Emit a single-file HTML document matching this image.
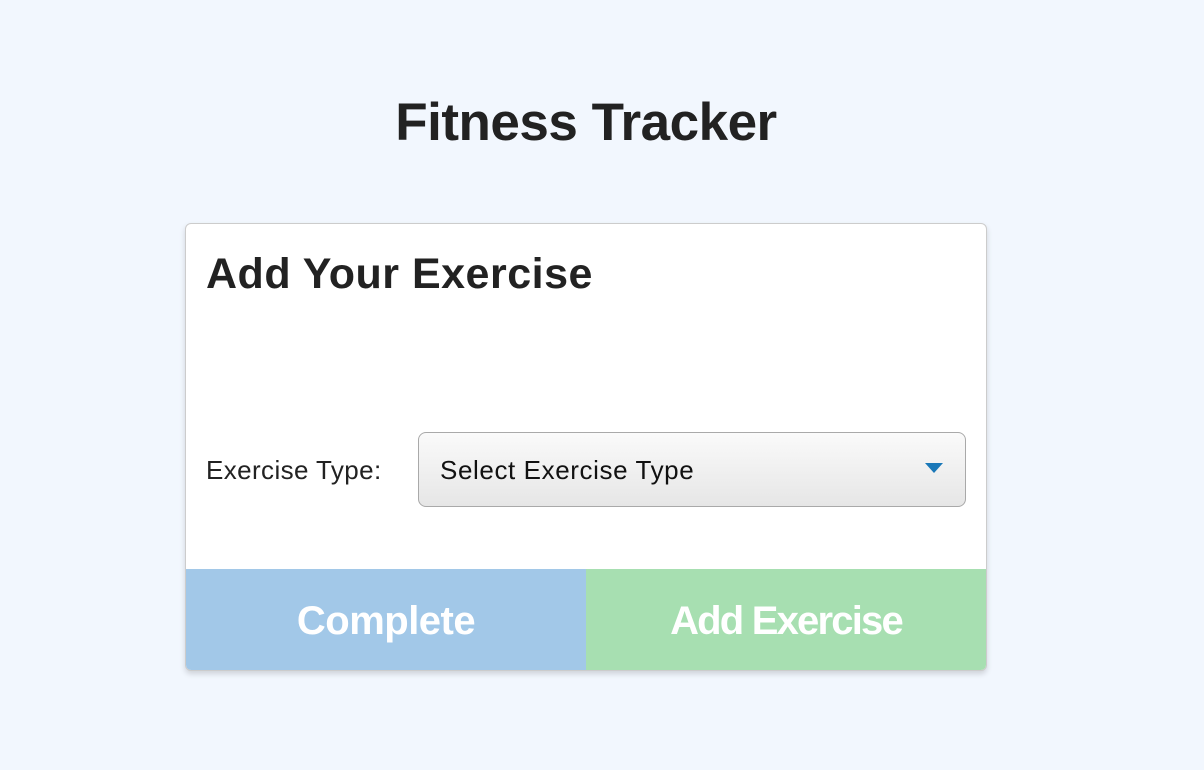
<!DOCTYPE html>
<html><head><style>
body{margin:0;background:#f2f7fe;font-family:"Liberation Sans",sans-serif;width:1204px;height:770px;position:relative;overflow:hidden}
h1{position:absolute;top:92px;left:0;width:1172px;margin:0;text-align:center;font-size:53px;font-weight:bold;color:#222;letter-spacing:-0.5px}
.card{position:absolute;left:185px;top:223px;width:800px;height:446px;background:#fff;border:1px solid #ccc;border-radius:6px;box-shadow:0 3px 6px rgba(0,0,0,.15);overflow:hidden}
h2{position:absolute;left:20px;top:26px;margin:0;font-size:43px;font-weight:bold;color:#222;letter-spacing:0.5px}
.lab{position:absolute;left:20px;top:231px;font-size:26px;color:#222;letter-spacing:0.4px}
.sel{position:absolute;left:232px;top:208px;width:548px;height:75px;border:1.5px solid #a9a9a9;border-radius:8px;background:linear-gradient(#fafafa,#e6e6e6);box-sizing:border-box}
.sel span{position:absolute;left:21px;top:22px;font-size:26px;color:#111;letter-spacing:0.6px}
.arr{position:absolute;right:22px;top:30px;width:0;height:0;border-left:9px solid transparent;border-right:9px solid transparent;border-top:10px solid #1a78b8}
.b{position:absolute;top:345px;height:101px;width:400px;color:#fff;font-weight:bold;font-size:40px;text-align:center;line-height:104px;letter-spacing:-0.5px}
</style></head><body>
<h1>Fitness Tracker</h1>
<div class="card">
<h2>Add Your Exercise</h2>
<div class="lab">Exercise Type:</div>
<div class="sel"><span>Select Exercise Type</span><div class="arr"></div></div>
<div class="b" style="left:0;background:#a2c8e8">Complete</div>
<div class="b" style="left:400px;background:#a7dfb1;letter-spacing:-1.8px">Add Exercise</div>
</div>
</body></html>
